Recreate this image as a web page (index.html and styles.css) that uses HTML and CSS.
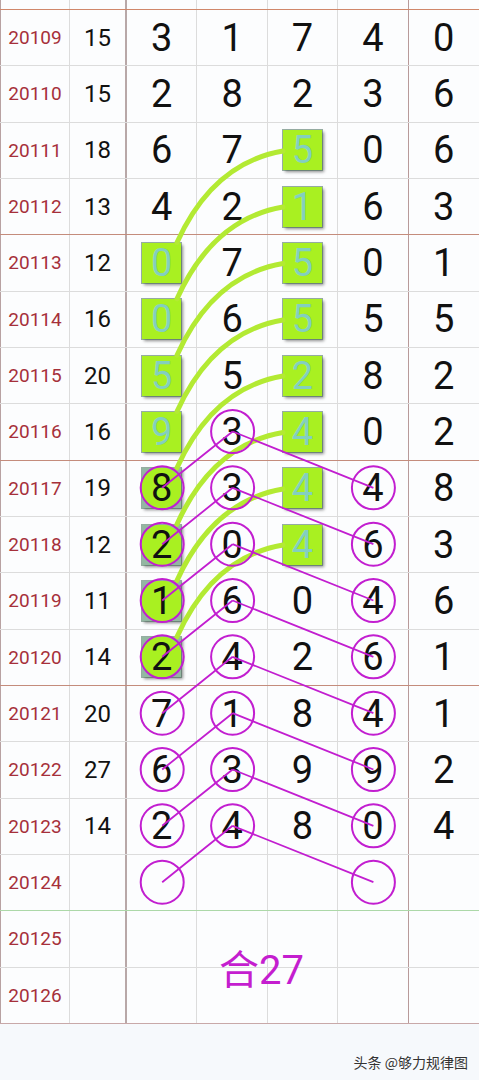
FILE: index.html
```html
<!DOCTYPE html>
<html lang="zh-CN">
<head>
<meta charset="utf-8">
<title>走势图</title>
<link rel="stylesheet" href="styles.css">
</head>
<body>
<div class="chart">
  <div class="row stub"><div class="c issue"></div><div class="c sum"></div><div class="c d"></div><div class="c d"></div><div class="c d"></div><div class="c d d4"></div><div class="c d"></div></div>
  <div class="row"><div class="c issue">20109</div><div class="c sum">15</div><div class="c d">3</div><div class="c d">1</div><div class="c d">7</div><div class="c d d4">4</div><div class="c d">0</div></div>
  <div class="row"><div class="c issue">20110</div><div class="c sum">15</div><div class="c d">2</div><div class="c d">8</div><div class="c d">2</div><div class="c d d4">3</div><div class="c d">6</div></div>
  <div class="row"><div class="c issue">20111</div><div class="c sum">18</div><div class="c d">6</div><div class="c d">7</div><div class="c d"><span class="sq">5</span></div><div class="c d d4">0</div><div class="c d">6</div></div>
  <div class="row sep"><div class="c issue">20112</div><div class="c sum">13</div><div class="c d">4</div><div class="c d">2</div><div class="c d"><span class="sq">1</span></div><div class="c d d4">6</div><div class="c d">3</div></div>
  <div class="row"><div class="c issue">20113</div><div class="c sum">12</div><div class="c d"><span class="sq">0</span></div><div class="c d">7</div><div class="c d"><span class="sq">5</span></div><div class="c d d4">0</div><div class="c d">1</div></div>
  <div class="row"><div class="c issue">20114</div><div class="c sum">16</div><div class="c d"><span class="sq">0</span></div><div class="c d">6</div><div class="c d"><span class="sq">5</span></div><div class="c d d4">5</div><div class="c d">5</div></div>
  <div class="row"><div class="c issue">20115</div><div class="c sum">20</div><div class="c d"><span class="sq">5</span></div><div class="c d">5</div><div class="c d"><span class="sq">2</span></div><div class="c d d4">8</div><div class="c d">2</div></div>
  <div class="row sep"><div class="c issue">20116</div><div class="c sum">16</div><div class="c d"><span class="sq">9</span></div><div class="c d">3</div><div class="c d"><span class="sq">4</span></div><div class="c d d4">0</div><div class="c d">2</div></div>
  <div class="row"><div class="c issue">20117</div><div class="c sum">19</div><div class="c d"><span class="sq ring">8</span></div><div class="c d">3</div><div class="c d"><span class="sq">4</span></div><div class="c d d4">4</div><div class="c d">8</div></div>
  <div class="row"><div class="c issue">20118</div><div class="c sum">12</div><div class="c d"><span class="sq ring">2</span></div><div class="c d">0</div><div class="c d"><span class="sq">4</span></div><div class="c d d4">6</div><div class="c d">3</div></div>
  <div class="row"><div class="c issue">20119</div><div class="c sum">11</div><div class="c d"><span class="sq ring">1</span></div><div class="c d">6</div><div class="c d">0</div><div class="c d d4">4</div><div class="c d">6</div></div>
  <div class="row sep"><div class="c issue">20120</div><div class="c sum">14</div><div class="c d"><span class="sq ring">2</span></div><div class="c d">4</div><div class="c d">2</div><div class="c d d4">6</div><div class="c d">1</div></div>
  <div class="row"><div class="c issue">20121</div><div class="c sum">20</div><div class="c d">7</div><div class="c d">1</div><div class="c d">8</div><div class="c d d4">4</div><div class="c d">1</div></div>
  <div class="row"><div class="c issue">20122</div><div class="c sum">27</div><div class="c d">6</div><div class="c d">3</div><div class="c d">9</div><div class="c d d4">9</div><div class="c d">2</div></div>
  <div class="row"><div class="c issue">20123</div><div class="c sum">14</div><div class="c d">2</div><div class="c d">4</div><div class="c d">8</div><div class="c d d4">0</div><div class="c d">4</div></div>
  <div class="row sep-green"><div class="c issue">20124</div><div class="c sum"></div><div class="c d"></div><div class="c d"></div><div class="c d"></div><div class="c d d4"></div><div class="c d"></div></div>
  <div class="row"><div class="c issue">20125</div><div class="c sum"></div><div class="c d"></div><div class="c d"></div><div class="c d"></div><div class="c d d4"></div><div class="c d"></div></div>
  <div class="row last"><div class="c issue">20126</div><div class="c sum"></div><div class="c d"></div><div class="c d"></div><div class="c d"></div><div class="c d d4"></div><div class="c d"></div></div>
</div>

<svg class="overlay" width="479" height="1080" viewBox="0 0 479 1080" xmlns="http://www.w3.org/2000/svg">
  <g class="arcs" fill="none" stroke-linecap="round">
    <path d="M283 151 Q213 163 177 242.5"/>
    <path d="M283 207 Q213 219 177 298.8"/>
    <path d="M283 263.5 Q213 275.5 177 355.2"/>
    <path d="M283 320 Q213 332 177 411.5"/>
    <path d="M283 376 Q213 388 177 467.8"/>
    <path d="M283 432.5 Q213 444.5 177 524.2"/>
    <path d="M283 489 Q213 501 177 580.5"/>
    <path d="M283 545 Q213 557 177 636.8"/>
  </g>
  <g class="lines" fill="none">
    <path d="M232.6 431.5 L373.4 487.8 M232.6 431.5 L162.2 487.8"/>
    <path d="M232.6 487.8 L373.4 544.2 M232.6 487.8 L162.2 544.2"/>
    <path d="M232.6 544.2 L373.4 600.5 M232.6 544.2 L162.2 600.5"/>
    <path d="M232.6 600.5 L373.4 656.8 M232.6 600.5 L162.2 656.8"/>
    <path d="M232.6 656.8 L373.4 713.2 M232.6 656.8 L162.2 713.2"/>
    <path d="M232.6 713.2 L373.4 769.5 M232.6 713.2 L162.2 769.5"/>
    <path d="M232.6 769.5 L373.4 825.8 M232.6 769.5 L162.2 825.8"/>
    <path d="M232.6 825.8 L373.4 882.2 M232.6 825.8 L162.2 882.2"/>
  </g>
  <g class="rings" fill="none">
    <circle cx="232.6" cy="431.5" r="21.5"/>
    <circle cx="232.6" cy="487.8" r="21.5"/>
    <circle cx="232.6" cy="544.2" r="21.5"/>
    <circle cx="232.6" cy="600.5" r="21.5"/>
    <circle cx="232.6" cy="656.8" r="21.5"/>
    <circle cx="232.6" cy="713.2" r="21.5"/>
    <circle cx="232.6" cy="769.5" r="21.5"/>
    <circle cx="232.6" cy="825.8" r="21.5"/>
    <circle cx="162.2" cy="487.8" r="21.5"/>
    <circle cx="162.2" cy="544.2" r="21.5"/>
    <circle cx="162.2" cy="600.5" r="21.5"/>
    <circle cx="162.2" cy="656.8" r="21.5"/>
    <circle cx="162.2" cy="713.2" r="21.5"/>
    <circle cx="162.2" cy="769.5" r="21.5"/>
    <circle cx="162.2" cy="825.8" r="21.5"/>
    <circle cx="162.2" cy="882.2" r="21.5"/>
    <circle cx="373.4" cy="487.8" r="21.5"/>
    <circle cx="373.4" cy="544.2" r="21.5"/>
    <circle cx="373.4" cy="600.5" r="21.5"/>
    <circle cx="373.4" cy="656.8" r="21.5"/>
    <circle cx="373.4" cy="713.2" r="21.5"/>
    <circle cx="373.4" cy="769.5" r="21.5"/>
    <circle cx="373.4" cy="825.8" r="21.5"/>
    <circle cx="373.4" cy="882.2" r="21.5"/>
  </g>
</svg>

<div class="total">合27</div>

<div class="footer">头条 @够力规律图</div>
</body>
</html>
```

FILE: styles.css
```css
html, body {
  margin: 0;
  padding: 0;
}
body {
  position: relative;
  width: 479px;
  height: 1080px;
  background: #f6f9fc;
  font-family: Roboto, "Noto Sans CJK SC", sans-serif;
  overflow: hidden;
}
.chart {
  display: flex;
  flex-direction: column;
  background: #fcfdfe;
}
.row {
  display: grid;
  grid-template-columns: 70px 57px repeat(5, 1fr);
  height: 56.333px;
  box-sizing: border-box;
  border-bottom: 1px solid #dcdcdc;
}
.row.stub {
  height: 10px;
  border-bottom: 1.5px solid #d0876a;
}
.row.sep {
  border-bottom: 1.5px solid #c48c7c;
}
.row.sep-green {
  border-bottom: 1.5px solid #acd8a8;
}
.row.last {
  border-bottom: 1.5px solid #c8a8a8;
}
.c {
  display: flex;
  align-items: center;
  justify-content: center;
  box-sizing: border-box;
  border-right: 1px solid #dcdcdc;
  color: #111;
}
.issue {
  border-left: 1.5px solid #b8a2a2;
  color: #a6303a;
  font-size: 19px;
}
.sum {
  border-right: 2px solid #b8a8a8;
  font-size: 24px;
}
.d {
  font-size: 38px;
}
.d4 {
  border-right: 1px solid #b89a9a;
}
.d:last-child {
  border-right: none;
}
.sq {
  display: flex;
  align-items: center;
  justify-content: center;
  width: 39px;
  height: 40px;
  background: #a9f021;
  color: #83cfbf;
  box-shadow: 0 0 0 1px rgba(70, 110, 90, 0.55), 2px 2px 3px rgba(0, 0, 0, 0.45);
}
.sq.ring {
  color: #111;
  background: radial-gradient(circle 21px at center, #a9f021 20px, #93b7a2 21px);
}
.overlay {
  position: absolute;
  top: 0;
  left: 0;
  pointer-events: none;
}
.arcs path {
  stroke: #b3ea33;
  stroke-width: 5;
}
.lines path {
  stroke: #c21ed0;
  stroke-width: 1.8;
}
.rings circle {
  stroke: #c21ed0;
  stroke-width: 2;
}
.total {
  position: absolute;
  left: 219px;
  top: 946px;
  font-size: 40px;
  line-height: 50px;
  color: #c41ecf;
}
.footer {
  position: absolute;
  right: 11px;
  bottom: 8px;
  font-family: "Noto Sans CJK SC", sans-serif;
  font-size: 14px;
  color: #333;
  text-shadow: 0 0 2px #fff;
}
```
